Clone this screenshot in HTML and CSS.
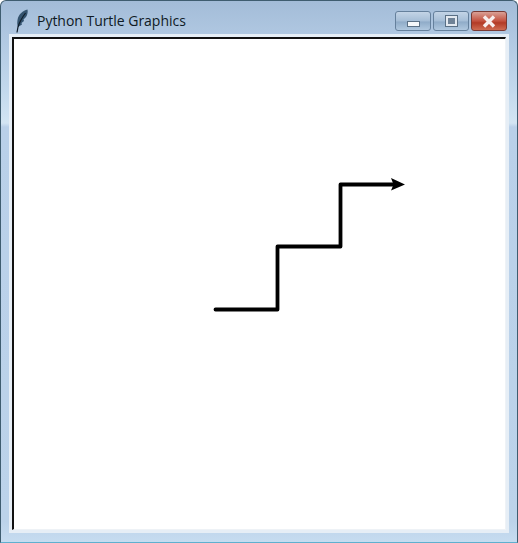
FILE: index.html
```html
<!DOCTYPE html>
<html lang="en">
<head>
    <meta charset="UTF-8">
    <meta name="viewport" content="width=device-width, initial-scale=1.0">
    <title>Python Turtle Graphics</title>
    <link rel="stylesheet" href="styles.css">
</head>
<body>
    <div class="window">
        <div class="titlebar">
            <svg class="feather" width="14" height="24" viewBox="0 0 14 24">
                <path d="M12.500 0.500C8 1.500 3.500 5 2.500 11C2 14 2.300 16.500 3 18L7 15.500L6.500 14L9 12L8.500 10.500L11 8C12.500 5.500 13 3 12.500 0.500Z" fill="#34536e"/>
                <path d="M10.500 4C7.500 8 4.500 13 3 18L2 23.500" fill="none" stroke="#0e1c29" stroke-width="1.200"/>
            </svg>
            <span class="title">Python Turtle Graphics</span>
            <div class="controls">
                <div class="ctrl">
                    <span class="min-icon"></span>
                </div>
                <div class="ctrl">
                    <span class="max-icon"></span>
                </div>
                <div class="ctrl ctrl-close">
                    <svg width="18" height="13" viewBox="0 0 18 13">
                        <path d="M4 1.500L14 11.500M14 1.500L4 11.500" stroke="#f7eeee" stroke-width="3.400" fill="none"/>
                    </svg>
                </div>
            </div>
        </div>
        <div class="frame">
            <div class="well">
                <svg class="canvas" width="491" height="490" viewBox="14 39 491 490">
                    <path d="M215.500 309.500H277.500V246.500H340.500V184.500H394" fill="none" stroke="#000" stroke-width="3.800" stroke-linecap="round" stroke-linejoin="round"/>
                    <path d="M391 178L405 184.500L391 190.500L393.500 184.500Z" fill="#000"/>
                </svg>
            </div>
        </div>
    </div>
</body>
</html>
```

FILE: styles.css
```css
* {
    margin: 0;
    padding: 0;
    box-sizing: border-box;
}

body {
    font-family: 'Open Sans', 'Noto Sans', sans-serif;
    background: #fff;
}

.window {
    width: 518px;
    height: 543px;
    display: flex;
    flex-direction: column;
    border: 1px solid #3f5d70;
    border-bottom-color: #5fb0cf;
    border-radius: 6px 6px 0 0;
    background: linear-gradient(to bottom, #a3bcd8 0, #aec6e0 30px, #c3d9ed 90px, #d3e5f3 122px, #b9d0e9 126px, #bcd3ea 520px, #c6dcf0 100%);
}

.titlebar {
    height: 33px;
    flex: none;
    display: flex;
    align-items: flex-start;
    padding-left: 14px;
}

.feather {
    margin-top: 8px;
}

.title {
    margin: 9px 0 0 8px;
    font-size: 14px;
    line-height: 22px;
    letter-spacing: -0.03px;
    color: #0f1a24;
}

.controls {
    margin-left: auto;
    margin-right: 10px;
    margin-top: 10px;
    display: flex;
    gap: 2px;
}

.ctrl {
    width: 36px;
    height: 20px;
    display: flex;
    align-items: center;
    justify-content: center;
    border: 1px solid #65809c;
    border-radius: 3px;
    background: linear-gradient(to bottom, #c3d4e6, #a5bdd6 50%, #8fabc8 55%, #b0c8df);
}

.ctrl-close {
    border-color: #7a3a34;
    background: linear-gradient(to bottom, #d9a096, #c4513f 50%, #b23a26 60%, #cf6b52);
}

.min-icon {
    width: 13px;
    height: 6px;
    margin-top: 6px;
    background: #f4f7fa;
    border: 1px solid #5a6f84;
}

.max-icon {
    width: 11px;
    height: 10px;
    background: #6f8296;
    border: 2px solid #e3e9f0;
    outline: 1px solid #5a6f84;
}

.frame {
    margin: 0 8px 9px 8px;
    flex: 1;
    display: flex;
    border: 3px solid #e6eef6;
}

.well {
    flex: 1;
    background: #fff;
    border-style: solid;
    border-width: 2px 1px 1px 2px;
    border-color: #111 #eef2f6 #eef2f6 #111;
}

.canvas {
    display: block;
    background: #fff;
}
```
